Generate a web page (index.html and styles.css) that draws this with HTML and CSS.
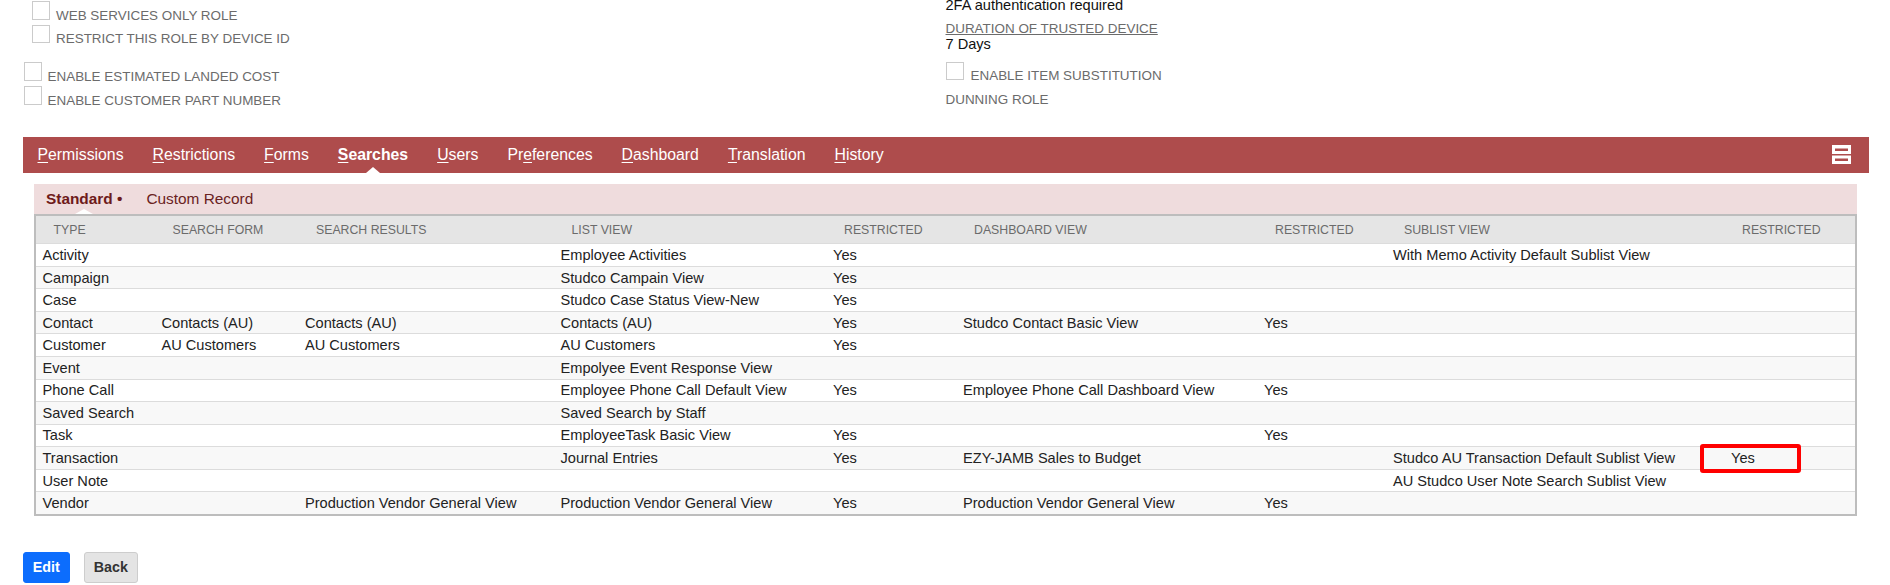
FILE: index.html
```html
<!DOCTYPE html>
<html>
<head>
<meta charset="utf-8">
<link rel="stylesheet" href="styles.css">
</head>
<body>
<div class="top">
  <div class="col-left">
    <div class="group1">
      <div class="cbrow"><span class="cb"></span><span class="lbl">WEB SERVICES ONLY ROLE</span></div>
      <div class="cbrow"><span class="cb"></span><span class="lbl">RESTRICT THIS ROLE BY DEVICE ID</span></div>
    </div>
    <div class="group2">
      <div class="cbrow tall"><span class="cb"></span><span class="lbl">ENABLE ESTIMATED LANDED COST</span></div>
      <div class="cbrow tall"><span class="cb"></span><span class="lbl">ENABLE CUSTOMER PART NUMBER</span></div>
    </div>
  </div>
  <div class="col-right">
    <div class="twofa">2FA authentication required</div>
    <div class="dur">DURATION OF TRUSTED DEVICE</div>
    <div class="days">7 Days</div>
    <div class="cbrow tall item"><span class="cb"></span><span class="lbl">ENABLE ITEM SUBSTITUTION</span></div>
    <div class="lbl dunning">DUNNING ROLE</div>
  </div>
</div>

<div class="tabbar">
  <span class="tab"><u>P</u>ermissions</span>
  <span class="tab"><u>R</u>estrictions</span>
  <span class="tab"><u>F</u>orms</span>
  <span class="tab active"><u>S</u>earches</span>
  <span class="tab"><u>U</u>sers</span>
  <span class="tab">Pr<u>e</u>ferences</span>
  <span class="tab"><u>D</u>ashboard</span>
  <span class="tab"><u>T</u>ranslation</span>
  <span class="tab"><u>H</u>istory</span>
  <svg class="menu" width="19" height="19" viewBox="0 0 19 19">
    <rect x="0" y="0" width="19" height="9" fill="#fff"/>
    <rect x="3" y="3.5" width="13" height="2.5" fill="#ae4c4c"/>
    <rect x="0" y="10.5" width="19" height="8.5" fill="#fff"/>
    <rect x="3" y="13.5" width="13" height="2.5" fill="#ae4c4c"/>
  </svg>
</div>

<div class="content">
  <div class="subtabs">
    <span class="subtab active">Standard <span class="dot">&bull;</span></span>
    <span class="subtab">Custom Record</span>
  </div>
  <table class="grid">
    <colgroup>
      <col class="c1"><col class="c2"><col class="c3"><col class="c4"><col class="c5"><col class="c6"><col class="c7"><col class="c8"><col class="c9">
    </colgroup>
    <thead>
      <tr>
        <th>TYPE</th><th>SEARCH FORM</th><th>SEARCH RESULTS</th><th>LIST VIEW</th><th>RESTRICTED</th><th>DASHBOARD VIEW</th><th>RESTRICTED</th><th>SUBLIST VIEW</th><th>RESTRICTED</th>
      </tr>
    </thead>
    <tbody>
      <tr><td>Activity</td><td></td><td></td><td>Employee Activities</td><td>Yes</td><td></td><td></td><td>With Memo Activity Default Sublist View</td><td></td></tr>
      <tr><td>Campaign</td><td></td><td></td><td>Studco Campain View</td><td>Yes</td><td></td><td></td><td></td><td></td></tr>
      <tr><td>Case</td><td></td><td></td><td>Studco Case Status View-New</td><td>Yes</td><td></td><td></td><td></td><td></td></tr>
      <tr><td>Contact</td><td>Contacts (AU)</td><td>Contacts (AU)</td><td>Contacts (AU)</td><td>Yes</td><td>Studco Contact Basic View</td><td>Yes</td><td></td><td></td></tr>
      <tr><td>Customer</td><td>AU Customers</td><td>AU Customers</td><td>AU Customers</td><td>Yes</td><td></td><td></td><td></td><td></td></tr>
      <tr><td>Event</td><td></td><td></td><td>Empolyee Event Response View</td><td></td><td></td><td></td><td></td><td></td></tr>
      <tr><td>Phone Call</td><td></td><td></td><td>Employee Phone Call Default View</td><td>Yes</td><td>Employee Phone Call Dashboard View</td><td>Yes</td><td></td><td></td></tr>
      <tr><td>Saved Search</td><td></td><td></td><td>Saved Search by Staff</td><td></td><td></td><td></td><td></td><td></td></tr>
      <tr><td>Task</td><td></td><td></td><td>EmployeeTask Basic View</td><td>Yes</td><td></td><td>Yes</td><td></td><td></td></tr>
      <tr><td>Transaction</td><td></td><td></td><td>Journal Entries</td><td>Yes</td><td>EZY-JAMB Sales to Budget</td><td></td><td>Studco AU Transaction Default Sublist View</td><td class="marked">Yes<span class="hl"></span></td></tr>
      <tr><td>User Note</td><td></td><td></td><td></td><td></td><td></td><td></td><td>AU Studco User Note Search Sublist View</td><td></td></tr>
      <tr><td>Vendor</td><td></td><td>Production Vendor General View</td><td>Production Vendor General View</td><td>Yes</td><td>Production Vendor General View</td><td>Yes</td><td></td><td></td></tr>
    </tbody>
  </table>
</div>

<div class="buttons">
  <button class="btn primary">Edit</button>
  <button class="btn secondary">Back</button>
</div>
</body>
</html>
```

FILE: styles.css
```css
html, body {
  margin: 0;
  padding: 0;
  background: #fff;
}
body {
  font-family: "Liberation Sans", Arial, sans-serif;
  color: #222;
  overflow: hidden;
}

/* ---------- top fields ---------- */
.top {
  display: grid;
  grid-template-columns: 922.5px 1fr;
  height: 137px;
  padding-left: 23px;
  box-sizing: border-box;
  overflow: hidden;
}
.group1 {
  padding-left: 9px;
  margin-top: 1px;
}
.group2 {
  padding-left: 0.5px;
  margin-top: 14px;
}
.cbrow {
  display: flex;
  align-items: baseline;
  height: 23.6px;
}
.cbrow.tall {
  height: 24.3px;
}
.cb {
  display: block;
  width: 18px;
  height: 18.5px;
  box-sizing: border-box;
  border: 1px solid #cbcbcb;
  background: #fff;
  flex: none;
}
.lbl {
  font-size: 13.45px;
  line-height: 15px;
  color: #6b6b6b;
  margin-left: 6px;
  white-space: nowrap;
}
.twofa {
  font-size: 14.6px;
  line-height: 16px;
  color: #111;
  margin-top: -3px;
}
.dur {
  font-size: 13.45px;
  line-height: 15px;
  color: #6b6b6b;
  text-decoration: underline;
  margin-top: 8.4px;
}
.days {
  font-size: 14.6px;
  line-height: 16px;
  color: #111;
  margin-top: -0.6px;
}
.item {
  margin-top: 10px;
}
.item .lbl {
  margin-left: 7px;
}
.dunning {
  margin-left: 0;
  margin-top: 5.6px;
}

/* ---------- tab bar ---------- */
.tabbar {
  display: flex;
  align-items: center;
  height: 35.7px;
  margin: 0 21px 0 23px;
  background: #ae4c4c;
}
.tab {
  position: relative;
  padding: 0 14.5px;
  font-size: 15.8px;
  color: #fff;
  line-height: 35.7px;
  white-space: nowrap;
}
.tab u {
  text-decoration-thickness: 1px;
  text-underline-offset: 2px;
}
.tab.active {
  font-weight: bold;
}
.tab.active::after {
  content: "";
  position: absolute;
  left: 50%;
  bottom: 0;
  transform: translateX(-50%);
  border-left: 7.5px solid transparent;
  border-right: 7.5px solid transparent;
  border-bottom: 6px solid #fff;
}
.menu {
  margin-left: auto;
  margin-right: 18px;
  display: block;
}

/* ---------- content ---------- */
.content {
  margin: 11.3px 33px 0 34px;
}
.subtabs {
  display: flex;
  align-items: center;
  height: 30px;
  background: #efdcdd;
}
.subtab {
  position: relative;
  padding: 0 12px;
  font-size: 15.4px;
  line-height: 30px;
  color: #6a2222;
  white-space: nowrap;
}
.subtab.active {
  font-weight: bold;
  color: #6e1a1a;
}
.subtab .dot {
  font-weight: bold;
}
.subtab.active::after {
  content: "";
  position: absolute;
  left: 50%;
  bottom: 0;
  transform: translateX(-50%);
  border-left: 9px solid transparent;
  border-right: 9px solid transparent;
  border-bottom: 5px solid #fff;
}

.grid {
  width: 100%;
  table-layout: fixed;
  border-collapse: separate;
  border-spacing: 0;
  border: 2px solid #bdbdbd;
}
.c1 { width: 119px; }
.c2 { width: 143.5px; }
.c3 { width: 255.5px; }
.c4 { width: 272.5px; }
.c5 { width: 130px; }
.c6 { width: 301px; }
.c7 { width: 129px; }
.c8 { width: 338px; }
.c9 { width: 130.5px; }

.grid th {
  height: 27.3px;
  padding: 0 0 0 17.5px;
  background: #e5e5e5;
  color: #6b6b6b;
  font-size: 12.3px;
  font-weight: normal;
  text-align: left;
  white-space: nowrap;
}
.grid td {
  height: 21.55px;
  padding: 0 0 0 6.5px;
  border-top: 1px solid #dcdcdc;
  font-size: 14.6px;
  line-height: 16px;
  color: #222;
  white-space: nowrap;
  overflow: visible;
  background: #fff;
}
.grid tbody tr:nth-child(even) td {
  background: #f8f8f8;
}
.grid td.marked {
  position: relative;
}
.hl {
  position: absolute;
  left: -25px;
  top: -3.6px;
  width: 101.4px;
  height: 29.6px;
  box-sizing: border-box;
  border: 4px solid #ff0000;
  border-radius: 3px;
}

/* ---------- buttons ---------- */
.buttons {
  display: flex;
  margin: 36.3px 0 0 23px;
}
.btn {
  height: 30.7px;
  padding: 0 8.75px;
  font-family: "Liberation Sans", Arial, sans-serif;
  font-size: 14.3px;
  font-weight: bold;
  border-radius: 3px;
  box-sizing: border-box;
  cursor: pointer;
}
.btn.primary {
  background: #0c6dfd;
  color: #fff;
  border: 1px solid #0c6dfd;
}
.btn.secondary {
  margin-left: 14.5px;
  background: #e4e4e4;
  color: #333;
  border: 1px solid #cdcdcd;
}
```
